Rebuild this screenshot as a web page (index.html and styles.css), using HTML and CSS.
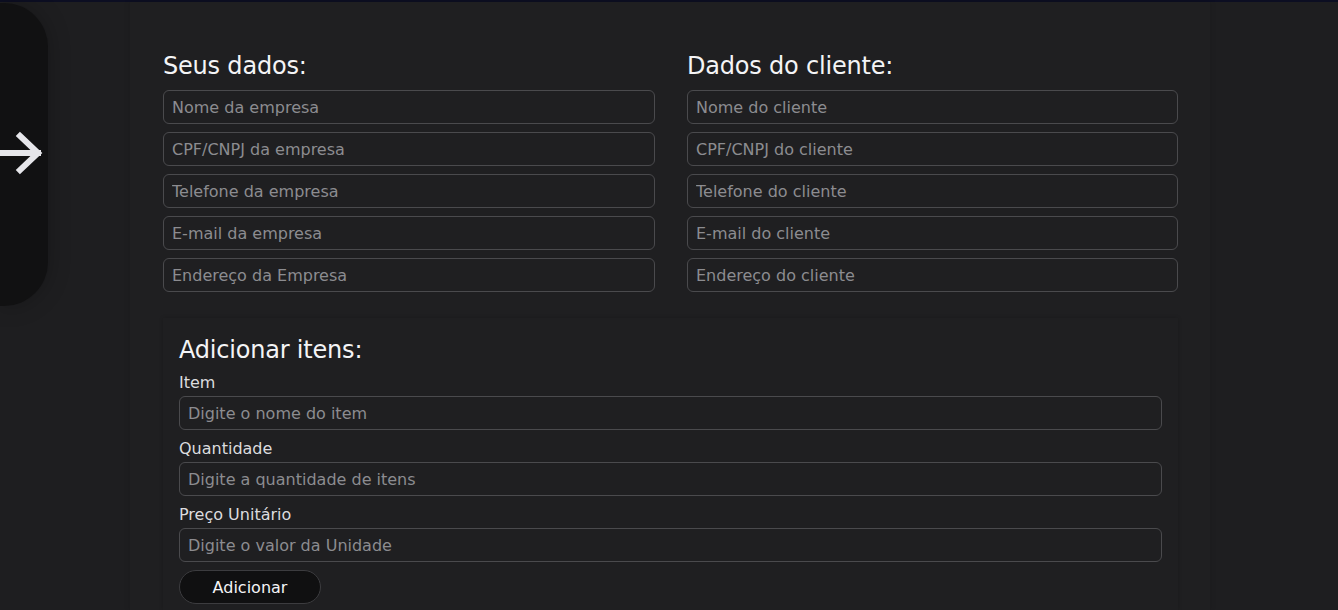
FILE: index.html
```html
<!DOCTYPE html>
<html lang="pt-BR">
<head>
<meta charset="utf-8">
<title>Orçamento</title>
<link rel="stylesheet" href="styles.css">
</head>
<body>
<div class="topline"></div>
<div class="page">
  <aside class="sidebar">
    <svg class="arrow" width="44" height="44" viewBox="0 0 44 44" aria-hidden="true">
      <path d="M-4 22 H38 M20 5 L38 22 L20 39" fill="none" stroke="#e6e6ea" stroke-width="6" stroke-linecap="square" stroke-linejoin="miter"/>
    </svg>
  </aside>
  <main class="main">
    <section class="parties">
      <div class="col">
        <h2 class="title">Seus dados:</h2>
        <input class="field" placeholder="Nome da empresa">
        <input class="field" placeholder="CPF/CNPJ da empresa">
        <input class="field" placeholder="Telefone da empresa">
        <input class="field" placeholder="E-mail da empresa">
        <input class="field" placeholder="Endereço da Empresa">
      </div>
      <div class="col">
        <h2 class="title">Dados do cliente:</h2>
        <input class="field" placeholder="Nome do cliente">
        <input class="field" placeholder="CPF/CNPJ do cliente">
        <input class="field" placeholder="Telefone do cliente">
        <input class="field" placeholder="E-mail do cliente">
        <input class="field" placeholder="Endereço do cliente">
      </div>
    </section>
    <section class="card">
      <h2 class="title">Adicionar itens:</h2>
      <label class="group">
        <span class="label">Item</span>
        <input class="field" placeholder="Digite o nome do item">
      </label>
      <label class="group">
        <span class="label">Quantidade</span>
        <input class="field" placeholder="Digite a quantidade de itens">
      </label>
      <label class="group">
        <span class="label">Preço Unitário</span>
        <input class="field" placeholder="Digite o valor da Unidade">
      </label>
      <button class="btn" type="button">Adicionar</button>
    </section>
  </main>
</div>
</body>
</html>
```

FILE: styles.css
```css
* { box-sizing: border-box; }
html, body { margin: 0; height: 100%; }
body {
  background: #1e1e20;
  font-family: "DejaVu Sans", "Noto Sans", sans-serif;
  color: #f2f2f4;
  overflow: hidden;
}
.topline { height: 2px; background: #0c0e22; }
.page { display: flex; align-items: flex-start; height: 608px; }
.sidebar {
  width: 48px;
  height: 303px;
  margin-top: 1px;
  background: #111112;
  border-radius: 0 44px 44px 0;
  box-shadow: 0 0 22px rgba(0,0,0,0.25);
  display: flex;
  align-items: center;
  flex-shrink: 0;
}
.arrow { display: block; margin-top: -4px; }
.main {
  margin-left: 82px;
  width: 1080px;
  height: 608px;
  background: #1f1f21;
  box-shadow: 0 0 6px rgba(0,0,0,0.15);
  padding: 48px 32px 0 33px;
}
.parties {
  display: grid;
  grid-template-columns: 492px 491px;
  column-gap: 32px;
}
.col { display: flex; flex-direction: column; gap: 8px; }
.title {
  margin: 0;
  font-weight: 400;
  font-size: 24px;
  line-height: 32px;
  color: #f4f4f6;
  letter-spacing: -0.2px;
}
.field {
  display: block;
  width: 100%;
  height: 34px;
  background: transparent;
  border: 1px solid #4a4a4d;
  border-radius: 6px;
  padding: 0 8px;
  font-family: inherit;
  font-size: 16px;
  color: #e0e0e0;
  outline: none;
}
.field::placeholder { color: #8c8c90; }
.card {
  margin-top: 26px;
  width: 1015px;
  background: #1f1f21;
  box-shadow: 0 0 4px rgba(0,0,0,0.18);
  padding: 16px 16px 6px;
  display: flex;
  flex-direction: column;
  gap: 10px;
}
.card .title { margin: 0 0 -2px; }
.group { display: flex; flex-direction: column; gap: 4px; }
.label { font-size: 16px; line-height: 18px; color: #dcdcdf; }
.btn {
  align-self: flex-start;
  margin-top: -2px;
  width: 142px;
  height: 34px;
  border-radius: 17px;
  border: 1px solid #3c3c3f;
  background: #101011;
  color: #f4f4f6;
  font-family: inherit;
  font-size: 16px;
}
```
